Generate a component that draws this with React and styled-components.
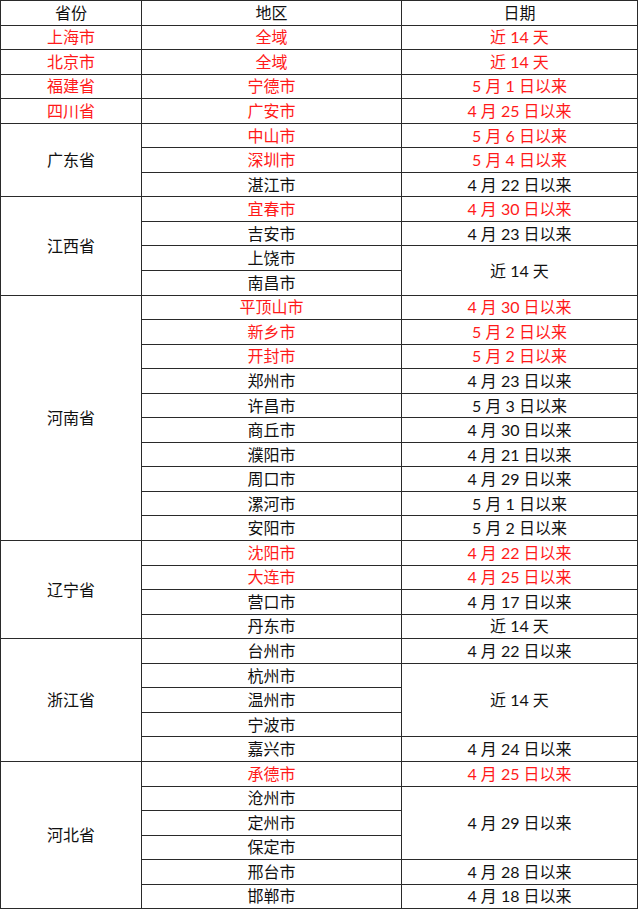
import React from "react";
import styled, { createGlobalStyle } from "styled-components";

const GlobalStyle = createGlobalStyle`
  html, body {
    margin: 0;
    padding: 0;
    background: #fff;
  }
  body {
    font-family: Lato, "Noto Sans CJK SC", sans-serif;
  }
`;

const Table = styled.table`
  width: 637px;
  border-collapse: collapse;
  table-layout: fixed;
  font-size: 16px;
  color: #111;
`;

const Row = styled.tr`
  height: 24.55px;
`;

const Cell = styled.td`
  border: 1px solid #2a2a2a;
  padding: 0;
  text-align: center;
  vertical-align: middle;
  line-height: 20px;
  color: ${(p) => (p.$red ? "#ff1a1a" : "#111")};
  white-space: nowrap;
`;

const HeadCell = styled(Cell).attrs({ as: "th" })`
  font-weight: normal;
`;

// [province, [ [city, date, red, dateSpan] ... ], provinceRed]
const groups = [
  ["上海市", [["全域", "近 14 天", true]], true],
  ["北京市", [["全域", "近 14 天", true]], true],
  ["福建省", [["宁德市", "5 月 1 日以来", true]], true],
  ["四川省", [["广安市", "4 月 25 日以来", true]], true],
  [
    "广东省",
    [
      ["中山市", "5 月 6 日以来", true],
      ["深圳市", "5 月 4 日以来", true],
      ["湛江市", "4 月 22 日以来"],
    ],
  ],
  [
    "江西省",
    [
      ["宜春市", "4 月 30 日以来", true],
      ["吉安市", "4 月 23 日以来"],
      ["上饶市", "近 14 天", false, 2],
      ["南昌市", null],
    ],
  ],
  [
    "河南省",
    [
      ["平顶山市", "4 月 30 日以来", true],
      ["新乡市", "5 月 2 日以来", true],
      ["开封市", "5 月 2 日以来", true],
      ["郑州市", "4 月 23 日以来"],
      ["许昌市", "5 月 3 日以来"],
      ["商丘市", "4 月 30 日以来"],
      ["濮阳市", "4 月 21 日以来"],
      ["周口市", "4 月 29 日以来"],
      ["漯河市", "5 月 1 日以来"],
      ["安阳市", "5 月 2 日以来"],
    ],
  ],
  [
    "辽宁省",
    [
      ["沈阳市", "4 月 22 日以来", true],
      ["大连市", "4 月 25 日以来", true],
      ["营口市", "4 月 17 日以来"],
      ["丹东市", "近 14 天"],
    ],
  ],
  [
    "浙江省",
    [
      ["台州市", "4 月 22 日以来"],
      ["杭州市", "近 14 天", false, 3],
      ["温州市", null],
      ["宁波市", null],
      ["嘉兴市", "4 月 24 日以来"],
    ],
  ],
  [
    "河北省",
    [
      ["承德市", "4 月 25 日以来", true],
      ["沧州市", "4 月 29 日以来", false, 3],
      ["定州市", null],
      ["保定市", null],
      ["邢台市", "4 月 28 日以来"],
      ["邯郸市", "4 月 18 日以来"],
    ],
  ],
];

const App = () => (
  <>
    <GlobalStyle />
    <Table>
      <colgroup>
        <col style={{ width: 141 }} />
        <col style={{ width: 260 }} />
        <col style={{ width: 236 }} />
      </colgroup>
      <thead>
        <Row>
          <HeadCell>省份</HeadCell>
          <HeadCell>地区</HeadCell>
          <HeadCell>日期</HeadCell>
        </Row>
      </thead>
      <tbody>
        {groups.map(([prov, cities, provRed]) =>
          cities.map(([city, date, red, span], i) => (
            <Row key={prov + city}>
              {i === 0 && (
                <Cell rowSpan={cities.length} $red={provRed}>
                  {prov}
                </Cell>
              )}
              <Cell $red={red}>{city}</Cell>
              {date !== null && (
                <Cell rowSpan={span || 1} $red={red}>
                  {date}
                </Cell>
              )}
            </Row>
          ))
        )}
      </tbody>
    </Table>
  </>
);

export default App;
